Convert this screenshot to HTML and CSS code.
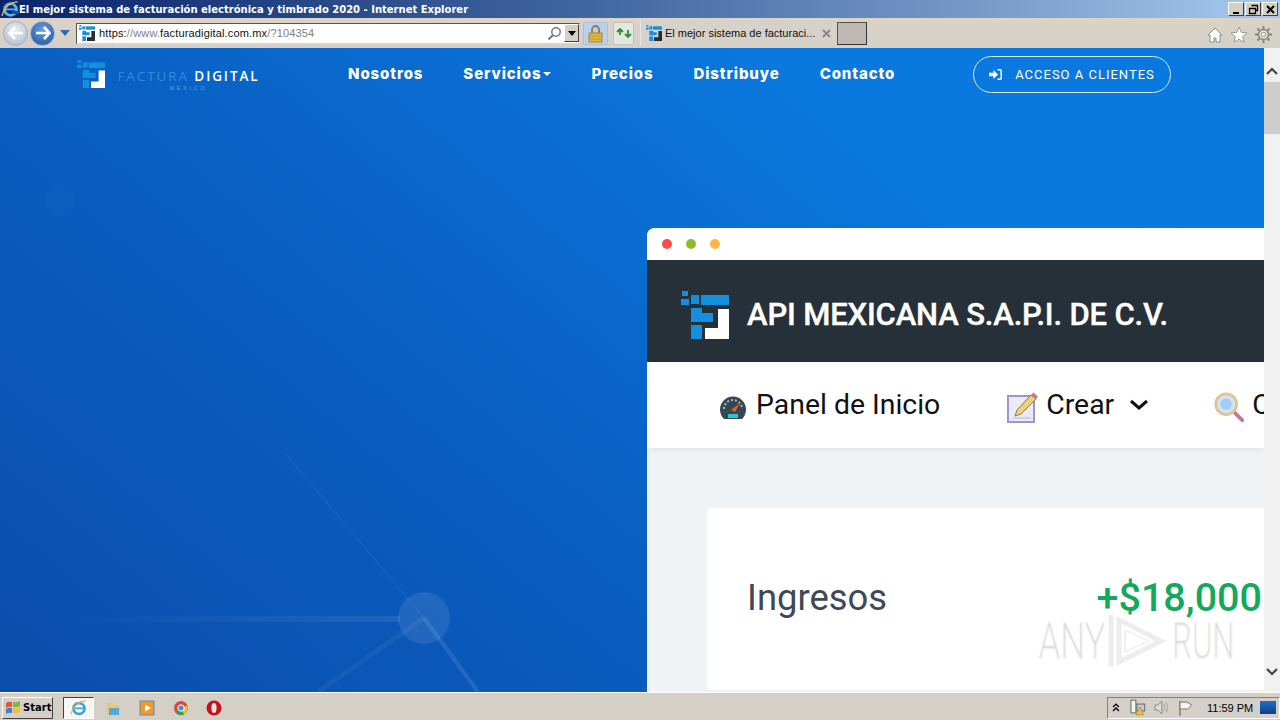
FILE: index.html
```html
<!DOCTYPE html>
<html lang="es">
<head>
    <meta charset="UTF-8">
    <title>El mejor sistema de facturación electrónica y timbrado 2020 - Internet Explorer</title>
    <link rel="stylesheet" href="styles.css">
</head>
<body>
    <div class="title-bar">
        <svg class="ie-logo" width="18" height="18" viewBox="0 0 18 18"><ellipse cx="9.500" cy="9.500" rx="6" ry="5.800" fill="none" stroke="#58b4ee" stroke-width="2.800"/><rect x="5" y="8.500" width="10" height="1.800" fill="#58b4ee"/><rect x="11" y="11" width="7" height="3" fill="#1d4f96"/><path d="M1 16C3 7 11 1 17 2" fill="none" stroke="#f0c040" stroke-width="1.200"/></svg>
        <span class="title-text">El mejor sistema de facturación electrónica y timbrado 2020 - Internet Explorer</span>
        <div class="window-buttons">
            <span class="win-btn"><svg width="9" height="9" viewBox="0 0 9 9"><rect x="1" y="7" width="6" height="2" fill="#000"/></svg></span>
            <span class="win-btn"><svg width="11" height="11" viewBox="0 0 11 11"><path d="M3.500 1.500h6v5h-2M1.500 4.500h6v5h-6z" fill="none" stroke="#000" stroke-width="1.300"/></svg></span>
            <span class="win-btn"><svg width="11" height="11" viewBox="0 0 11 11"><path d="M2 2l7 7M9 2l-7 7" stroke="#000" stroke-width="2"/></svg></span>
        </div>
    </div>

    <div class="toolbar">
        <span class="nav-circle back"><svg width="16" height="14" viewBox="0 0 16 14"><path d="M7 1L1.500 7 7 13M2 7h13" fill="none" stroke="#fff" stroke-width="2.600"/></svg></span>
        <span class="nav-circle forward"><svg width="16" height="14" viewBox="0 0 16 14"><path d="M9 1l5.500 6L9 13M14 7H1" fill="none" stroke="#fff" stroke-width="2.600"/></svg></span>
        <svg class="nav-drop" width="10" height="6" viewBox="0 0 10 6"><path d="M0 0h10L5 6z" fill="#2b6cb0"/></svg>
        <div class="address">
            <svg class="favicon" width="16" height="16" viewBox="0 0 48 48"><use href="#fd-logo"/></svg>
            <span class="url">https:<i>//www.</i>facturadigital.com.mx<i>/?104354</i></span>
            <svg class="search-icon" width="15" height="15" viewBox="0 0 15 15"><circle cx="9" cy="6" r="4.200" fill="none" stroke="#777" stroke-width="1.500"/><path d="M6 9l-4.500 4.500" stroke="#777" stroke-width="2"/></svg>
            <span class="addr-drop"><svg width="8" height="5" viewBox="0 0 8 5"><path d="M0 0h8L4 5z" fill="#000"/></svg></span>
        </div>
        <span class="lock-btn"><svg width="15" height="19" viewBox="0 0 15 19"><path d="M4 9V5.500a3.500 3.500 0 0 1 7 0V9" fill="none" stroke="#8f7a44" stroke-width="1.800"/><rect x="1" y="9" width="13" height="9" fill="#e2b53c" stroke="#a98425"/><path d="M1 12h13M1 15h13" stroke="#c99c2e"/></svg></span>
        <span class="refresh-btn"><svg width="16" height="14" viewBox="0 0 16 14"><path d="M1 6l3-3 3 3M4 4v5" fill="none" stroke="#2c8a3c" stroke-width="1.800"/><path d="M9 8l3 3 3-3M12 10V4" fill="none" stroke="#2c8a3c" stroke-width="1.800"/></svg></span>
        <div class="tab">
            <svg class="favicon" width="16" height="16" viewBox="0 0 48 48"><use href="#fd-logo"/></svg>
            <span class="tab-text">El mejor sistema de facturaci...</span>
            <svg class="tab-close" width="9" height="9" viewBox="0 0 9 9"><path d="M1 1l7 7M8 1L1 8" stroke="#8a8a8a" stroke-width="2"/></svg>
        </div>
        <span class="new-tab"></span>
        <div class="tool-icons">
            <svg width="16" height="16" viewBox="0 0 16 16"><path d="M8 1L1 8h2v7h4v-4h2v4h4V8h2z" fill="#fff" stroke="#8d8d88"/></svg>
            <svg width="18" height="17" viewBox="0 0 18 17"><path d="M9 1l2.300 5.300 5.700.5-4.300 3.800 1.300 5.600L9 13.300 4 16.200l1.300-5.600L1 6.800l5.700-.5z" fill="#fff" stroke="#9a9a94"/></svg>
            <svg width="17" height="17" viewBox="0 0 17 17"><circle cx="8.500" cy="8.500" r="5" fill="#e8e6e0" stroke="#85857f" stroke-width="1.500"/><circle cx="8.500" cy="8.500" r="2.200" fill="#fff" stroke="#85857f"/><path d="M8.500 0v3M8.500 14v3M0 8.500h3M14 8.500h3M2.500 2.500l2 2M12.500 12.500l2 2M2.500 14.500l2-2M12.500 4.500l2-2" stroke="#85857f" stroke-width="2"/></svg>
        </div>
    </div>

    <div class="viewport">
        <main class="hero">
            <svg class="hero-decor" width="1264" height="644" viewBox="0 0 1264 644">
                <defs>
                    <linearGradient id="fade-left" x1="0" y1="0" x2="1" y2="0">
                        <stop offset="0" stop-color="#fff" stop-opacity="0"/>
                        <stop offset="1" stop-color="#fff" stop-opacity="0.08"/>
                    </linearGradient>
                </defs>
                <circle cx="60" cy="152" r="16" fill="#fff" opacity="0.015"/>
                <rect x="60" y="568" width="340" height="6" fill="url(#fade-left)"/>
                <path d="M285 405L424 570" stroke="#fff" stroke-width="2" opacity="0.04" fill="none"/>
                <path d="M424 570L318 644" stroke="#fff" stroke-width="5" opacity="0.05" fill="none"/>
                <path d="M424 570L478 644" stroke="#fff" stroke-width="4" opacity="0.1" fill="none"/>
                <circle cx="424" cy="570" r="26" fill="#fff" opacity="0.09"/>
            </svg>

            <nav class="site-nav">
                <div class="brand">
                    <svg width="28" height="28" viewBox="0 0 48 48" class="brand-mark"><use href="#fd-logo"/></svg>
                    <div class="brand-name">
                        <span class="brand-line"><span class="brand-dim">FACTURA</span> DIGITAL</span>
                        <span class="brand-sub">MÉXICO</span>
                    </div>
                </div>
                <ul class="nav-links">
                    <li>Nosotros</li>
                    <li>Servicios<span class="caret"></span></li>
                    <li>Precios</li>
                    <li>Distribuye</li>
                    <li>Contacto</li>
                </ul>
                <a class="client-btn">
                    <svg width="13" height="11" viewBox="0 0 13 11"><path d="M0 3.800h4.500V1L9 5.500 4.500 10V7.200H0z" fill="#fff"/><path d="M8.500 .8h2.700a1 1 0 0 1 1 1v7.400a1 1 0 0 1-1 1H8.500" fill="none" stroke="#fff" stroke-width="1.500"/></svg>
                    ACCESO A CLIENTES
                </a>
            </nav>

            <section class="app-window">
                <div class="window-bar">
                    <span class="dot red"></span>
                    <span class="dot green"></span>
                    <span class="dot orange"></span>
                </div>
                <header class="app-header">
                    <svg width="48" height="48" viewBox="0 0 48 48"><use href="#fd-logo"/></svg>
                    <h1>API MEXICANA S.A.P.I. DE C.V.</h1>
                </header>
                <div class="app-menu">
                    <div class="menu-item panel">
                        <svg width="28" height="26" viewBox="0 0 28 26"><path d="M5 25a13 13 0 1 1 18 0z" fill="#37474f"/><path d="M5 15a9 9 0 0 1 18 0" fill="none" stroke="#a6b7bf" stroke-width="2" stroke-dasharray="2 2"/><path d="M12 16l9-7-5 9z" fill="#e25d33"/><rect x="9" y="20" width="10" height="4" fill="#26c6da"/></svg>
                        Panel de Inicio
                    </div>
                    <div class="menu-item crear">
                        <svg width="32" height="32" viewBox="0 0 32 32"><rect x="1" y="5" width="26" height="26" fill="#eceaf6" stroke="#9c98cc" stroke-width="2"/><path d="M8 25l2-6L24 4l5 4-15 15z" fill="#f2cf73" stroke="#8b7a55"/><path d="M24 4l2.500-2.500 4.500 4L29 8z" fill="#d6719a"/><path d="M6 27h18" stroke="#b8b4dc"/></svg>
                        Crear
                        <svg class="chevron" width="18" height="11" viewBox="0 0 18 11"><path d="M1 2l8 7 8-7" fill="none" stroke="#111" stroke-width="3"/></svg>
                    </div>
                    <div class="menu-item search">
                        <svg width="32" height="32" viewBox="0 0 34 34"><path d="M21 21l10 10" stroke="#c2759c" stroke-width="4" stroke-linecap="round"/><circle cx="14" cy="14" r="11" fill="#cfe4fb" stroke="#e2c48c" stroke-width="3"/><circle cx="14" cy="14" r="6" fill="#a6cbf7"/></svg>
                        Consultar
                    </div>
                </div>
                <div class="app-body">
                    <div class="stat-card">
                        <span class="stat-label">Ingresos</span>
                        <span class="stat-value">+$18,000</span>
                    </div>
                </div>
            </section>

            <div class="watermark">
                <span class="wm-word wm-any">ANY</span>
                <svg width="58" height="58" viewBox="0 0 58 58"><path d="M3 3v52M11 8l42 21-42 21z" fill="none" stroke="#000" stroke-opacity="0.07" stroke-width="5"/><path d="M17 18l24 11-24 11z" fill="none" stroke="#000" stroke-opacity="0.05" stroke-width="2"/></svg>
                <span class="wm-word">RUN</span>
            </div>
        </main>

        <aside class="scrollbar">
            <span class="arrow"><svg width="12" height="8" viewBox="0 0 12 8"><path d="M1 7l5-5 5 5" fill="none" stroke="#444" stroke-width="2.200"/></svg></span>
            <span class="thumb"></span>
            <span class="track"></span>
            <span class="arrow"><svg width="12" height="8" viewBox="0 0 12 8"><path d="M1 1l5 5 5-5" fill="none" stroke="#444" stroke-width="2.200"/></svg></span>
        </aside>
    </div>

    <footer class="taskbar">
        <span class="start-btn">
            <svg width="16" height="15" viewBox="0 0 16 15"><path d="M1 3q3-2 6-1v5q-3-1-6 1z" fill="#e2572c"/><path d="M8 2q3 1 7-1v5q-4 2-7 1z" fill="#7fb83c"/><path d="M1 9q3-2 6-1v5q-3-1-6 1z" fill="#3d7fd6"/><path d="M8 8q3 1 7-1v5q-4 2-7 1z" fill="#f2c230"/></svg>
            Start
        </span>
        <span class="task-ie"><svg width="18" height="18" viewBox="0 0 18 18"><ellipse cx="9" cy="9.500" rx="5.600" ry="5.400" fill="none" stroke="#3f9fe0" stroke-width="2.600"/><rect x="5" y="8.500" width="9" height="1.600" fill="#3f9fe0"/><path d="M1 15C3 7 11 1 16 2" fill="none" stroke="#e8b830" stroke-width="1.200"/></svg></span>
        <span class="task-icon"><svg width="16" height="16" viewBox="0 0 16 16"><path d="M1 3h6l1 2h6v10H1z" fill="#e8c96a"/><rect x="3" y="8" width="10" height="7" fill="#5aa6d8"/></svg></span>
        <span class="task-icon"><svg width="16" height="16" viewBox="0 0 16 16"><rect x="1" y="1" width="14" height="14" fill="#f09a2c" stroke="#5c8cc0"/><path d="M6 4.500l6 3.500-6 3.500z" fill="#fff"/></svg></span>
        <span class="task-icon"><svg width="16" height="16" viewBox="0 0 16 16"><circle cx="8" cy="8" r="7" fill="#d9483b"/><path d="M8 8L2 12a7 7 0 0 0 9 2.500z" fill="#3a9d4c"/><path d="M8 8l6-2.500A7 7 0 0 1 11 14.500z" fill="#f2c230"/><circle cx="8" cy="8" r="3.200" fill="#4a8ce0" stroke="#fff"/></svg></span>
        <span class="task-icon"><svg width="16" height="16" viewBox="0 0 16 16"><circle cx="8" cy="8" r="7.500" fill="#c8111c"/><ellipse cx="8" cy="8" rx="2.600" ry="5" fill="#f3e4e4"/></svg></span>
        <div class="tray">
            <svg width="8" height="9" viewBox="0 0 8 9"><path d="M1 4l3-3 3 3M1 8l3-3 3 3" fill="none" stroke="#000" stroke-width="1.300"/></svg>
            <svg class="tray-net" width="18" height="17" viewBox="0 0 18 17"><rect x="2" y="1" width="5" height="13" fill="#f2f2ee" stroke="#666"/><rect x="8" y="5" width="8" height="7" fill="#c4c8cc" stroke="#666"/><path d="M11 8l4 8H7z" fill="#f2c230" stroke="#8a7020" stroke-width=".5"/></svg>
            <svg width="16" height="15" viewBox="0 0 16 15"><path d="M1 5h3l4-4v13l-4-4H1z" fill="#dedcd6" stroke="#8a8a86"/><path d="M10 4q2 3.500 0 7M12.500 2.500q3 5 0 10" fill="none" stroke="#a2a2a0"/></svg>
            <svg class="tray-flag" width="16" height="16" viewBox="0 0 16 16"><path d="M2 1v15" stroke="#666" stroke-width="1.200"/><path d="M2 2h7l5 3-4 4H2z" fill="#f4f3ef" stroke="#77776f"/></svg>
            <span class="clock">11:59 PM</span>
            <span class="show-desktop"></span>
        </div>
    </footer>

    <svg class="defs" width="0" height="0">
        <defs>
            <g id="fd-logo">
                <rect x="1" y="0" width="6" height="5" fill="#1290dd"/>
                <rect x="0" y="8" width="8" height="6" fill="#1290dd"/>
                <rect x="10" y="4" width="8" height="9" fill="#1290dd"/>
                <rect x="20" y="4" width="28" height="10" fill="#1290dd"/>
                <path d="M10 17h11v5h11v9H10z" fill="#1290dd"/>
                <rect x="10" y="34" width="11" height="14" fill="#1290dd"/>
                <path d="M37 18h11v30H24V37h13z" fill="currentColor"/>
            </g>
        </defs>
    </svg>
</body>
</html>
```

FILE: styles.css
```css
* {
    box-sizing: border-box;
}

html, body {
    margin: 0;
    height: 720px;
    overflow: hidden;
}

body {
    display: flex;
    flex-direction: column;
    width: 1280px;
    font-family: "Liberation Sans", Arial, sans-serif;
    background-color: #d4d0c8;
}

.defs {
    position: absolute;
}

/* window title */
.title-bar {
    display: flex;
    align-items: center;
    height: 18px;
    flex-shrink: 0;
    padding-left: 1px;
    background: linear-gradient(90deg, #0a246a 0%, #3f659f 45%, #7596c6 75%, #a6caf0 100%);
}

.ie-logo {
    flex-shrink: 0;
}

.title-text {
    font-family: "DejaVu Sans", sans-serif;
    font-size: 10px;
    font-weight: 700;
    color: #fff;
    white-space: nowrap;
}

.window-buttons {
    display: flex;
    gap: 1px;
    margin-left: auto;
    padding-right: 2px;
}

.win-btn {
    display: flex;
    align-items: center;
    justify-content: center;
    width: 16px;
    height: 14px;
    background-color: #d4d0c8;
    border: 1px solid;
    border-color: #fff #404040 #404040 #fff;
}

/* IE toolbar */
.toolbar {
    display: flex;
    align-items: center;
    height: 30px;
    flex-shrink: 0;
    padding: 0 0 0 3px;
    background: linear-gradient(180deg, #ddd3c6 0%, #d4d0c8 100%);
}

.nav-circle {
    display: flex;
    align-items: center;
    justify-content: center;
    width: 25px;
    height: 25px;
    border-radius: 50%;
    border: 1px solid #9fb0c6;
}

.nav-circle.back {
    background: radial-gradient(circle at 50% 35%, #e9eef4, #aab8c9);
}

.nav-circle.forward {
    margin-left: 2px;
    background: radial-gradient(circle at 50% 35%, #6a9fdc, #1c4f9c);
}

.nav-drop {
    margin-left: 5px;
}

.address {
    display: flex;
    align-items: center;
    width: 504px;
    height: 21px;
    margin-left: 6px;
    padding-left: 2px;
    background-color: #fff;
    border: 1px solid;
    border-color: #55544f #d8d6d0 #d8d6d0 #55544f;
}

.favicon {
    flex-shrink: 0;
    color: #242d33;
}

.address .favicon {
    margin-right: 4px;
}

.url {
    font-size: 11px;
    letter-spacing: 0.15px;
    color: #111;
    white-space: nowrap;
}

.url i {
    font-style: normal;
    color: #808080;
}

.search-icon {
    margin-left: auto;
    margin-right: 2px;
}

.addr-drop {
    display: flex;
    align-items: center;
    justify-content: center;
    width: 15px;
    height: 18px;
    background-color: #d4d0c8;
    border: 1px solid;
    border-color: #fff #404040 #404040 #fff;
}

.lock-btn, .refresh-btn {
    display: flex;
    align-items: center;
    justify-content: center;
    height: 23px;
    border-radius: 2px;
}

.lock-btn {
    width: 25px;
    margin-left: 3px;
    background-color: #b9d0ee;
    border: 1px solid #a9bedb;
}

.refresh-btn {
    width: 21px;
    margin-left: 5px;
    background-color: #e4e6e0;
    border: 1px solid #c2c2bc;
}

.tab {
    display: flex;
    align-items: center;
    width: 197px;
    height: 26px;
    margin-left: 6px;
    padding-left: 5px;
    background-color: #d6d2ca;
    border-left: 1px solid #e8e6e0;
}

.tab-text {
    margin-left: 3px;
    font-size: 11px;
    color: #111;
    white-space: nowrap;
}

.tab-close {
    margin-left: 7px;
}

.new-tab {
    width: 30px;
    height: 23px;
    background-color: #bdb8b2;
    border: 1px solid;
    border-color: #55544f #333 #333 #55544f;
}

.tool-icons {
    display: flex;
    align-items: center;
    gap: 7px;
    margin-left: auto;
    padding-right: 8px;
    padding-top: 3px;
}

/* page area */
.viewport {
    display: flex;
    height: 644px;
    flex-shrink: 0;
}

.hero {
    position: relative;
    width: 1264px;
    overflow: hidden;
    background: linear-gradient(40deg, #0b4dac 0%, #0a5fc2 40%, #0a78de 75%, #0878e0 100%);
}

.hero-decor {
    position: absolute;
    left: 0;
    top: 0;
}

.site-nav {
    position: relative;
    display: flex;
    align-items: center;
    height: 52px;
    padding-left: 77px;
}

.brand {
    display: flex;
    align-items: center;
    width: 271px;
}

.brand-mark {
    flex-shrink: 0;
    color: #fff;
}

.brand-name {
    display: flex;
    flex-direction: column;
    align-items: center;
    width: 153px;
    margin: 13px 0 0 7px;
    line-height: 1;
}

.brand-line {
    font-family: "Open Sans", sans-serif;
    font-size: 13.500px;
    font-weight: 600;
    letter-spacing: 1.9px;
    color: #fff;
    white-space: nowrap;
}

.brand-dim {
    font-weight: 400;
    color: #2f8ae0;
}

.brand-sub {
    margin-top: 3px;
    font-size: 5px;
    letter-spacing: 3px;
    color: #5ca6e8;
}

.nav-links {
    display: flex;
    gap: 40px;
    width: 625px;
    margin: -2px 0 0;
    padding: 0;
    list-style: none;
    font-family: "Inter", sans-serif;
    font-size: 15px;
    font-weight: 800;
    letter-spacing: 0.9px;
    color: #fff;
}

.caret {
    display: inline-block;
    margin-left: 2px;
    vertical-align: 3px;
    border-top: 4px solid #fff;
    border-left: 4px solid transparent;
    border-right: 4px solid transparent;
}

.client-btn {
    display: flex;
    align-items: center;
    justify-content: center;
    gap: 13px;
    width: 198px;
    height: 37px;
    margin-top: 1px;
    padding-bottom: 1px;
    border: 1px solid #d6ecff;
    border-radius: 19px;
    font-family: "Roboto", sans-serif;
    font-size: 13px;
    font-weight: 400;
    letter-spacing: 1px;
    color: #fff;
}

/* dashboard mock */
.app-window {
    position: relative;
    width: 617px;
    margin: 128px 0 0 647px;
    border-radius: 8px 0 0 0;
    overflow: hidden;
    background-color: #f0f3f5;
    font-family: "Roboto", sans-serif;
}

.window-bar {
    display: flex;
    align-items: center;
    gap: 14px;
    height: 32px;
    padding-left: 15px;
    background-color: #fff;
}

.dot {
    width: 10px;
    height: 10px;
    border-radius: 50%;
}

.dot.red {
    background-color: #fc4a4a;
}

.dot.green {
    background-color: #8ebc2c;
}

.dot.orange {
    background-color: #fdb544;
}

.app-header {
    display: flex;
    align-items: center;
    gap: 18px;
    height: 102px;
    padding: 7px 0 0 34px;
    color: #fff;
    background-color: #263038;
}

.app-header h1 {
    margin: 0;
    font-size: 31px;
    font-weight: 500;
    letter-spacing: -0.15px;
    -webkit-text-stroke: 0.4px #fff;
    color: #fff;
    white-space: nowrap;
}

.app-menu {
    display: flex;
    align-items: center;
    height: 86px;
    padding: 0 0 2px 72px;
    background-color: #fff;
    box-shadow: 0 1px 6px rgba(0, 0, 0, 0.08);
    font-size: 28.400px;
    color: #111;
    white-space: nowrap;
}

.menu-item {
    display: flex;
    align-items: center;
    gap: 9px;
    flex-shrink: 0;
}

.menu-item svg {
    margin-top: 6px;
}

.menu-item.crear {
    margin-left: 67px;
    gap: 7px;
}

.menu-item .chevron {
    margin: 0 0 0 9px;
}

.menu-item.search {
    margin-left: 65px;
    gap: 7px;
}

.app-body {
    padding: 60px 0 0 60px;
    height: 300px;
}

.stat-card {
    display: flex;
    justify-content: space-between;
    width: 600px;
    height: 182px;
    padding: 67px 0 0 40px;
    background-color: #fff;
    border-radius: 4px;
    line-height: 46px;
    white-space: nowrap;
}

.stat-label {
    font-size: 36.400px;
    color: #3d4956;
}

.stat-value {
    font-size: 39.500px;
    font-weight: 500;
    color: #14a85c;
    margin-right: 45px;
}

.watermark {
    position: absolute;
    left: 1038px;
    top: 564px;
    display: flex;
    align-items: center;
    gap: 6px;
    height: 58px;
    font-family: "Roboto", sans-serif;
    font-size: 50px;
    font-weight: 300;
    color: rgba(0, 0, 0, 0.06);
    text-shadow: 1px 1px 2px rgba(0, 0, 0, 0.08);
    white-space: nowrap;
}

.wm-word {
    display: inline-block;
    width: 62px;
    transform: scaleX(0.62);
    transform-origin: left center;
}

.wm-word.wm-any {
    width: 64px;
    transform: scaleX(0.7);
}

/* scrollbar */
.scrollbar {
    display: flex;
    flex-direction: column;
    width: 16px;
    background-color: #f1f1f1;
}

.arrow {
    display: flex;
    align-items: center;
    justify-content: center;
    height: 17px;
    margin-top: 14px;
}

.thumb {
    height: 52px;
    margin-top: 3px;
    background-color: #cdcdcd;
}

.track {
    flex: 1;
}

.scrollbar .arrow:last-child {
    margin: 0 0 12px;
}

/* taskbar */
.taskbar {
    display: flex;
    align-items: center;
    height: 28px;
    flex-shrink: 0;
    padding: 2px 0 0 2px;
    background-color: #d4d0c8;
    border-top: 1px solid #fff;
}

.start-btn {
    display: flex;
    align-items: center;
    gap: 2px;
    width: 51px;
    height: 22px;
    padding-left: 2px;
    border: 1px solid;
    border-color: #fff #404040 #404040 #fff;
    font-family: "DejaVu Sans", sans-serif;
    font-size: 10px;
    font-weight: 700;
    color: #000;
}

.task-ie {
    display: flex;
    align-items: center;
    justify-content: center;
    width: 31px;
    height: 22px;
    margin-left: 10px;
    background-color: #f7f6f2;
    border: 1px solid;
    border-color: #404040 #fff #fff #404040;
}

.task-icon {
    display: flex;
    justify-content: center;
    width: 33.500px;
}

.task-icon:nth-child(3) {
    margin-left: 3px;
}

.tray {
    display: flex;
    align-items: center;
    gap: 7px;
    width: 173px;
    height: 22px;
    margin-left: auto;
    padding: 0 3px 0 4px;
    border: 1px solid;
    border-color: #808080 #fff #fff #808080;
}

.tray-net {
    margin-left: 2px;
}

.tray-flag {
    margin-left: 2px;
}

.clock {
    margin-left: 6px;
    font-size: 11px;
    color: #000;
    white-space: nowrap;
}

.show-desktop {
    width: 16px;
    height: 13px;
    margin-left: auto;
    background: linear-gradient(180deg, #1f6fc8, #0f3e84);
}
```
